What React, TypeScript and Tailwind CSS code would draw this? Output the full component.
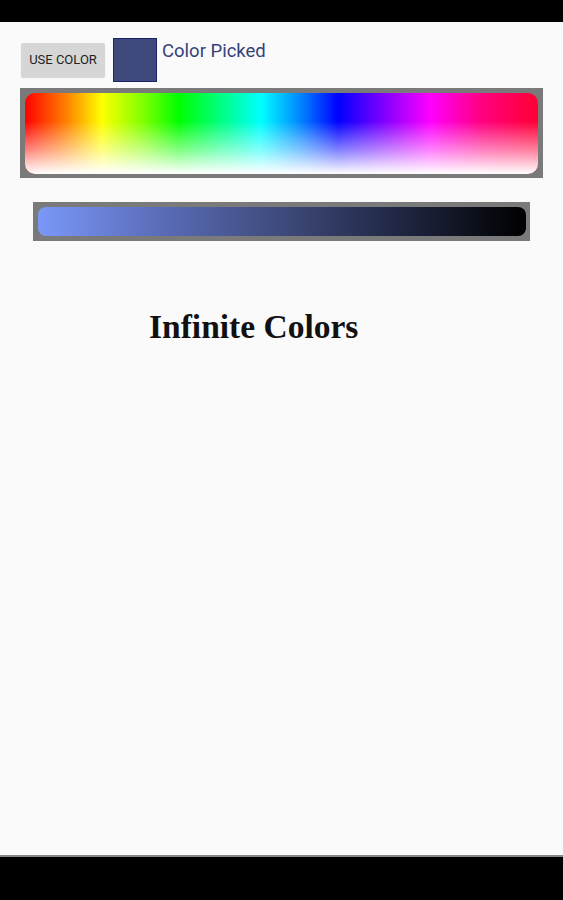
export default function App() {
  return (
    <div className="flex h-[900px] w-[563px] flex-col bg-black">
      <div className="h-[22px] shrink-0 bg-black" />
      <div className="flex flex-1 flex-col bg-[#fafafa]">
        {/* Top row */}
        <div className="flex items-start pl-[21px] pt-[16px]">
          <button className="mt-[5px] flex h-[34px] w-[84px] items-center justify-center rounded-[2px] bg-[#d6d6d6] text-[13px] text-[#222] shadow-[0_1px_1px_rgba(0,0,0,0.15)] font-['Roboto',sans-serif]">
            USE COLOR
          </button>
          <div className="ml-[8px] h-[44px] w-[44px] border border-[#1b2466] bg-[#3e4a7b]" />
          <span className="ml-[5px] mt-[1px] text-[18.5px] leading-[24px] text-[#34427a] font-['Roboto',sans-serif]">
            Color Picked
          </span>
        </div>

        {/* Hue spectrum */}
        <div className="mx-[20px] mt-[6px] h-[90px] bg-[#7a7a7a] p-[5px] pb-[4px]">
          <div className="relative h-full w-full overflow-hidden rounded-[10px] bg-[linear-gradient(to_right,#ff0000_0%,#ff8000_8%,#ffff00_15%,#80ff00_23%,#00ff00_30%,#00ff80_38%,#00ffff_46%,#0080ff_54%,#0000ff_61%,#8000ff_70%,#ff00ff_79%,#ff0080_89%,#ff0033_100%)]">
            <div className="absolute inset-0 bg-[linear-gradient(to_bottom,rgba(255,255,255,0)_35%,rgba(255,255,255,0.5)_70%,#ffffff_100%)]" />
          </div>
        </div>

        {/* Shade slider */}
        <div className="mx-[33px] mt-[24px] h-[39px] bg-[#7a7a7a] p-[5px] pr-[4px]">
          <div className="h-full w-full rounded-[8px] bg-[linear-gradient(to_right,#7b98f8_0%,#5a6cb8_25%,#3e4a7b_50%,#1e2540_75%,#000000_100%)]" />
        </div>

        <div className="mt-[66px] pl-[149px] text-[33.5px] font-bold leading-[40px] text-[#111] font-['Liberation_Serif',serif]">
          Infinite Colors
        </div>
      </div>
      <div className="h-[2px] shrink-0 bg-[#888]" />
      <div className="h-[43px] shrink-0 bg-black" />
    </div>
  );
}
